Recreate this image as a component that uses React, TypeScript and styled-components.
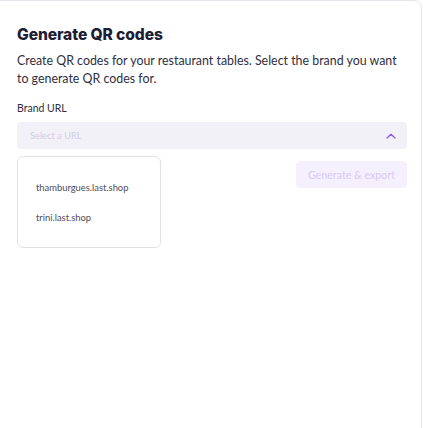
import React from 'react';
import styled, { createGlobalStyle } from 'styled-components';

const GlobalStyle = createGlobalStyle`
  html, body {
    margin: 0;
    padding: 0;
    background: #ffffff;
  }
  body {
    width: 423px;
    height: 428px;
    overflow: hidden;
  }
`;

const Card = styled.section`
  box-sizing: border-box;
  margin-left: -10px;
  width: 432px;
  height: 440px;
  border: 1px solid #e6e5ef;
  border-radius: 8px;
  background: #fff;
  padding: 23px 16px 0 26px;
`;

const Title = styled.h1`
  margin: 0;
  font-family: 'Inter', 'Noto Sans', sans-serif;
  font-weight: 800;
  font-size: 15.6px;
  line-height: 22px;
  color: #1e1d36;
  letter-spacing: -0.1px;
`;

const Description = styled.p`
  margin: 6px 0 0;
  font-family: 'Lato', 'Noto Sans', sans-serif;
  font-size: 12.4px;
  line-height: 18px;
  color: #2f2e3f;
`;

const Label = styled.label`
  display: block;
  margin-top: 13px;
  font-family: 'Lato', 'Noto Sans', sans-serif;
  font-size: 10.5px;
  line-height: 14px;
  color: #2f2e3f;
`;

const SelectWrap = styled.div`
  position: relative;
  margin-top: 7px;
`;

const SelectBox = styled.button`
  box-sizing: border-box;
  width: 390px;
  height: 27px;
  display: flex;
  align-items: center;
  justify-content: space-between;
  padding: 0 11px 0 13px;
  border: none;
  border-radius: 4px;
  background: #f2f1f7;
  cursor: pointer;
`;

const Placeholder = styled.span`
  font-family: 'Lato', 'Noto Sans', sans-serif;
  font-size: 9.3px;
  color: #d4cde3;
`;

const Menu = styled.ul`
  position: absolute;
  top: 34px;
  left: 0;
  box-sizing: border-box;
  width: 144px;
  height: 92px;
  margin: 0;
  padding: 25px 0 0 18px;
  list-style: none;
  border: 1px solid #e2e0ec;
  border-radius: 6px;
  background: #fff;
  z-index: 2;
`;

const MenuItem = styled.li`
  font-family: 'Lato', 'Noto Sans', sans-serif;
  font-size: 9.4px;
  line-height: 12px;
  color: #4f4d5c;
  & + & {
    margin-top: 18px;
  }
`;

const Actions = styled.div`
  display: flex;
  justify-content: flex-end;
  width: 390px;
  margin-top: 12px;
`;

const ExportButton = styled.button`
  box-sizing: border-box;
  width: 111px;
  height: 27px;
  border: none;
  border-radius: 4px;
  background: #f4f0fe;
  color: #d8c9fb;
  font-family: 'Lato', 'Noto Sans', sans-serif;
  font-size: 10.7px;
  cursor: not-allowed;
`;

const ChevronUp = () => (
  <svg width="10" height="6" viewBox="0 0 10 6" fill="none">
    <path d="M1 5L5 1.2L9 5" stroke="#8b5cf6" strokeWidth="1.3" strokeLinecap="round" strokeLinejoin="round" />
  </svg>
);

const urls = ['thamburgues.last.shop', 'trini.last.shop'];

export default function App() {
  return (
    <>
      <GlobalStyle />
      <Card>
        <Title>Generate QR codes</Title>
        <Description>
          Create QR codes for your restaurant tables. Select the brand you want to generate QR codes for.
        </Description>
        <Label>Brand URL</Label>
        <SelectWrap>
          <SelectBox type="button">
            <Placeholder>Select a URL</Placeholder>
            <ChevronUp />
          </SelectBox>
          <Menu>
            {urls.map((u) => (
              <MenuItem key={u}>{u}</MenuItem>
            ))}
          </Menu>
        </SelectWrap>
        <Actions>
          <ExportButton type="button" disabled>
            Generate &amp; export
          </ExportButton>
        </Actions>
      </Card>
    </>
  );
}
